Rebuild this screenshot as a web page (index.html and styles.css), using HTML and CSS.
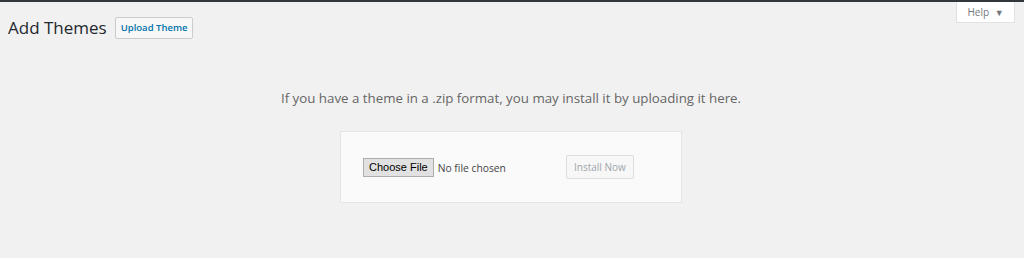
FILE: index.html
```html
<!DOCTYPE html>
<html lang="en">
<head>
  <meta charset="UTF-8">
  <meta name="viewport" content="width=device-width, initial-scale=1.0">
  <title>Add Themes</title>
  <link rel="stylesheet" href="styles.css">
</head>
<body>

  <div class="admin-bar-edge"></div>

  <div class="screen-meta-links">
    <button class="help-tab">Help <span class="help-arrow">&#9660;</span></button>
  </div>

  <div class="wrap">
    <div class="page-header">
      <h1 class="page-title">Add Themes</h1>
      <button class="upload-button">Upload Theme</button>
    </div>

    <div class="upload-theme">
      <p class="install-help">If you have a theme in a .zip format, you may install it by uploading it here.</p>
      <form class="upload-form">
        <input type="file" class="file-input" name="themezip">
        <button type="button" class="install-button" disabled>Install Now</button>
      </form>
    </div>
  </div>

</body>
</html>
```

FILE: styles.css
```css
body {
  margin: 0;
  background-color: #f1f1f1;
  font-family: "Open Sans", "Noto Sans", sans-serif;
  color: #444;
}

.admin-bar-edge {
  height: 2px;
  background-color: #32373c;
}

.screen-meta-links {
  float: right;
  margin-right: 9px;
}

.help-tab {
  display: block;
  width: 59px;
  height: 21px;
  padding: 0;
  border: 1px solid #e1e1e1;
  border-top: none;
  background-color: #fff;
  color: #72777c;
  font-family: "Open Sans", "Noto Sans", sans-serif;
  font-size: 10px;
}

.help-arrow {
  font-size: 9px;
  margin-left: 3px;
  color: #72777c;
}

.wrap {
  padding: 14px 0 0 8px;
}

.page-header {
  display: flex;
  align-items: center;
  gap: 8px;
}

.page-title {
  margin: 0;
  font-size: 17px;
  font-weight: 400;
  color: #23282d;
}

.upload-button {
  height: 22px;
  padding: 0 5px;
  border: 1px solid #ccc;
  border-radius: 2px;
  background-color: #f7f7f7;
  color: #0073aa;
  font-family: "Open Sans", "Noto Sans", sans-serif;
  font-size: 9.5px;
  font-weight: 600;
}

.upload-theme {
  display: flex;
  flex-direction: column;
  align-items: center;
  padding-right: 10px;
}

.install-help {
  margin: 50px 0 24px;
  font-size: 13.3px;
  color: #666;
}

.upload-form {
  display: flex;
  align-items: center;
  width: 318px;
  height: 70px;
  padding: 0 0 0 22px;
  border: 1px solid #e5e5e5;
  background-color: #fafafa;
}

.file-input {
  width: 200px;
  font-family: "Open Sans", "Noto Sans", sans-serif;
  font-size: 10.3px;
  color: #444;
}

.file-input::file-selector-button {
  height: 19px;
  margin-right: 4px;
  padding: 0 5px;
  border: 1px solid #adadad;
  border-radius: 0;
  background-color: #e1e1e1;
  color: #000;
  font-family: "Liberation Sans", Arial, sans-serif;
  font-size: 11px;
}

.install-button {
  height: 24px;
  margin-left: 3px;
  padding: 0 7px;
  border: 1px solid #ddd;
  border-radius: 2px;
  background-color: #f7f7f7;
  color: #a0a5aa;
  font-family: "Open Sans", "Noto Sans", sans-serif;
  font-size: 10px;
}
```
